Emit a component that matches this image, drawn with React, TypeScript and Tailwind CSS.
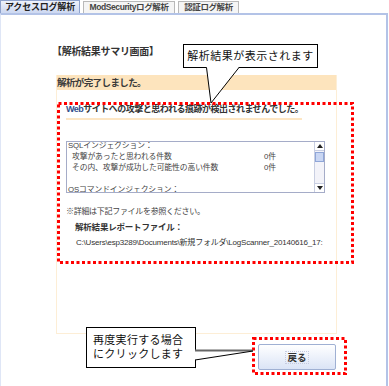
import React from 'react';

const DottedFrame = ({ w, h }: { w: number; h: number }) => (
  <svg width={w} height={h} className="block">
    <rect x={1.5} y={1.5} width={w - 3} height={h - 3} fill="none" stroke="#ff0000" strokeWidth={3} strokeDasharray="3 2.5" />
  </svg>
);

const ScrollBar = () => (
  <div className="w-[10px] border-l border-[#c9cfe2] flex flex-col bg-[#f3f3f9]">
    <div className="h-[9px] border-b border-[#c9cfe2] bg-white flex items-center justify-center">
      <svg width="6" height="4"><path d="M0 4 L3 0 L6 4 Z" fill="#222" /></svg>
    </div>
    <div className="mt-[1px] h-[10px] border border-[#8fa6d8] bg-[#c9d6f3]" />
    <div className="flex-1" />
    <div className="h-[9px] border-t border-[#c9cfe2] bg-white flex items-center justify-center">
      <svg width="6" height="4"><path d="M0 0 L3 4 L6 0 Z" fill="#222" /></svg>
    </div>
  </div>
);

const App = () => {
  return (
    <div className="relative w-[389px] h-[386px] bg-white overflow-hidden font-['Liberation_Sans','Noto_Sans_CJK_JP',sans-serif] text-[#333]">
      {/* tabs */}
      <div className="flex items-end h-[13px] gap-[3px]">
        <div className="h-[13px] w-[80px] border border-b-0 border-[#8ea2cc] bg-gradient-to-b from-[#eef2fb] to-[#cdd8f1] text-[9px] font-bold leading-[12px] text-center text-[#222] tracking-[-0.2px]">
          アクセスログ解析
        </div>
        <div className="h-[12px] w-[92px] border border-b-0 border-[#b9b9b9] bg-[#f5f5f5] text-[8.5px] font-bold leading-[11px] text-center text-[#444] tracking-[-0.4px]">
          ModSecurityログ解析
        </div>
        <div className="h-[12px] w-[61px] border border-b-0 border-[#b9b9b9] bg-[#f5f5f5] text-[8.5px] font-bold leading-[11px] text-center text-[#444] tracking-[-0.4px]">
          認証ログ解析
        </div>
      </div>

      {/* panel */}
      <div className="h-[373px] w-[388px] border-t-2 border-r-2 border-l border-[#b3c3e7] border-l-[#dfe6f6]">
        <div className="pl-[51px] pt-[31px] text-[10px] font-bold leading-[12px] tracking-[-0.3px]">【解析結果サマリ画面】</div>

        <div className="ml-[55px] mt-[17px] w-[281px] h-[259px] border border-t-0 border-[#fdeed6]">
          <div className="h-[15px] bg-[#fde4bd] text-[9.5px] font-bold leading-[15px] tracking-[-0.6px] text-[#3a3a3a]">解析が完了しました。</div>

          <div className="pl-[9px] pt-[14px]">
            <div className="w-[236px] border-b-2 border-[#fde6c4] pb-[3px] text-[9px] font-bold leading-[11px] tracking-[-0.5px] whitespace-nowrap">
              <span className="text-[#34508c]">Web</span>サイトへの攻撃と思われる痕跡が検出されませんでした。
            </div>

            <div className="mt-[21px] w-[259px] h-[52px] border border-[#a5acc8] flex overflow-hidden">
              <div className="flex-1 text-[7.8px] leading-[11px] text-[#444] -mt-[2px] tracking-[-0.1px]">
                <div className="pl-[1px]">SQLインジェクション：</div>
                <div className="flex pl-[5px]">
                  <span className="w-[192px]">攻撃があったと思われる件数</span>
                  <span>0件</span>
                </div>
                <div className="flex pl-[5px]">
                  <span className="w-[192px]">その内、攻撃が成功した可能性の高い件数</span>
                  <span>0件</span>
                </div>
                <div className="h-[11px]" />
                <div className="pl-[1px]">OSコマンドインジェクション：</div>
              </div>
              <ScrollBar />
            </div>

            <div className="mt-[13px] text-[8px] leading-[11px] text-[#444] tracking-[-0.3px]">※詳細は下記ファイルを参照ください。</div>
            <div className="mt-[5px] pl-[9px] text-[8.5px] font-bold leading-[11px] tracking-[-0.2px]">解析結果レポートファイル：</div>
            <div className="mt-[4px] pl-[10px] text-[8px] leading-[11px] text-[#333] whitespace-nowrap tracking-[-0.2px]">
              C:\Users\esp3289\Documents\新規フォルダ\LogScanner_20140616_17:
            </div>
          </div>
        </div>

        <div className="ml-[257px] mt-[10px] w-[78px] h-[26px] border border-[#9fb0d3] rounded-[2px] bg-gradient-to-b from-white to-[#dbe4f6] flex items-center justify-center">
          <span className="text-[9.5px] font-bold leading-[11px] text-[#333] outline outline-1 outline-dotted outline-[#c5cbe0] px-[1px]">戻る</span>
        </div>
      </div>

      {/* annotations */}
      <div className="absolute left-[57px] top-[102px]">
        <DottedFrame w={297} h={162} />
      </div>
      <div className="absolute left-[252px] top-[337px]">
        <DottedFrame w={95} h={38} />
      </div>

      <div className="absolute left-[183px] top-[44px] w-[135px] h-[24px] border border-black bg-white text-[11px] leading-[22px] text-center text-[#111] tracking-[0.5px]">
        解析結果が表示されます
      </div>
      <svg className="absolute left-0 top-0" width="389" height="386" style={{ pointerEvents: 'none' }}>
        <polygon points="206.5,67 239,67 211,103" fill="#fff" />
        <line x1="206.5" y1="67.5" x2="211" y2="103" stroke="#000" strokeWidth="1" />
        <line x1="239" y1="67.5" x2="211" y2="103" stroke="#000" strokeWidth="1" />
      </svg>

      <div className="absolute left-[86px] top-[327px] w-[110px] h-[41px] border border-black bg-white pl-[6px] pt-[5px] text-[11px] leading-[14px] text-[#111] tracking-[0.3px]">
        <div>再度実行する場合</div>
        <div>にクリックします</div>
      </div>
      <svg className="absolute left-0 top-0" width="389" height="386" style={{ pointerEvents: 'none' }}>
        <polygon points="195,350 253,350 195,360" fill="#fff" />
        <line x1="195" y1="350.5" x2="253" y2="350.5" stroke="#666" strokeWidth="2" />
        <line x1="195" y1="360" x2="253" y2="351" stroke="#000" strokeWidth="1" />
      </svg>
    </div>
  );
};

export default App;
